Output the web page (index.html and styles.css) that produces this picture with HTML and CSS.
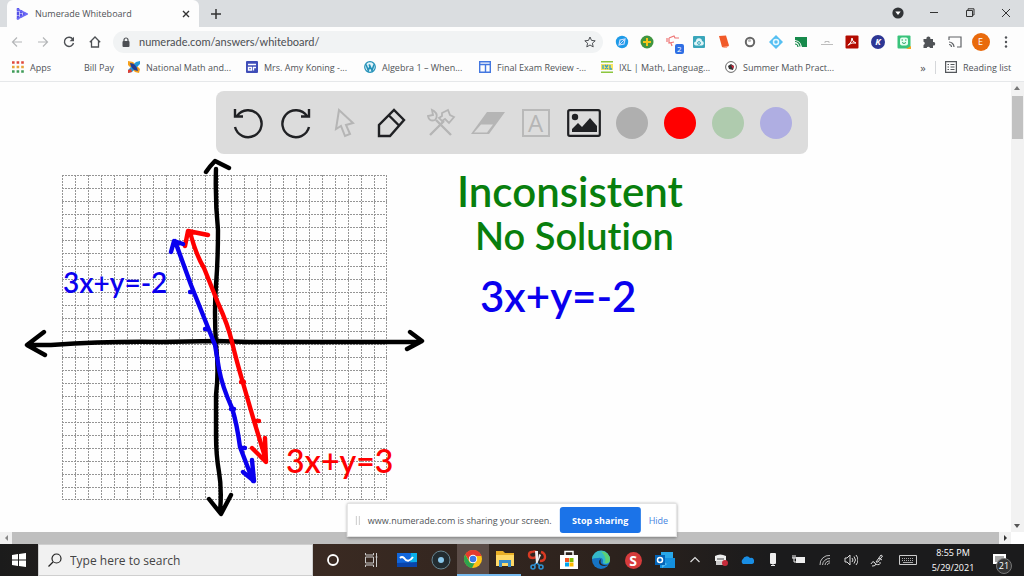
FILE: index.html
```html
<!DOCTYPE html>
<html lang="en">
<head>
<meta charset="utf-8">
<title>Numerade Whiteboard</title>
<link rel="stylesheet" href="styles.css">
</head>
<body>
<header class="tabstrip">
  <div class="tab">
    <svg class="icon12" viewBox="0 0 12 12"><path d="M2 0v12M5 2v8M8 4v4" stroke="#5551e8" stroke-width="2.400" stroke-dasharray="3.400 .6"/><path d="M1 1l10 5-10 5" fill="none" stroke="#6c69f5" stroke-width="1.800"/></svg>
    <span class="tab-title">Numerade Whiteboard</span>
    <button class="plain" aria-label="Close tab"><svg class="icon8" viewBox="0 0 8 8"><path d="M1 1l6 6M7 1L1 7" stroke="#333" stroke-width="1.400"/></svg></button>
  </div>
  <button class="plain newtab" aria-label="New tab"><svg class="icon10" viewBox="0 0 10 10"><path d="M5 0v10M0 5h10" stroke="#333" stroke-width="1.500"/></svg></button>
  <div class="window-buttons">
    <button class="plain" aria-label="Tab search"><svg class="icon12" viewBox="0 0 12 12"><circle cx="6" cy="6" r="5.600" fill="#303336"/><path d="M3.300 4.400h5.400L6 8z" fill="#fff"/></svg></button>
    <button class="plain" aria-label="Minimize"><svg class="icon10" viewBox="0 0 10 10"><path d="M1 4.500h8" stroke="#333"/></svg></button>
    <button class="plain" aria-label="Restore"><svg class="icon10" viewBox="0 0 10 10"><path d="M1.500 2.500h6v6h-6zM3 2.500V.8h6V7H7.500" fill="none" stroke="#333"/></svg></button>
    <button class="plain" aria-label="Close"><svg class="icon10" viewBox="0 0 10 10"><path d="M1 1l8 8M9 1L1 9" stroke="#333"/></svg></button>
  </div>
</header>

<div class="toolbar">
  <nav class="nav">
    <button class="plain" aria-label="Back"><svg class="icon12" viewBox="0 0 12 12"><path d="M11 6H1.500M6 1.500L1.500 6 6 10.500" fill="none" stroke="#b4b6b8" stroke-width="1.200"/></svg></button>
    <button class="plain" aria-label="Forward"><svg class="icon12" viewBox="0 0 12 12"><path d="M1 6h9.500M6 1.500L10.500 6 6 10.500" fill="none" stroke="#b4b6b8" stroke-width="1.200"/></svg></button>
    <button class="plain" aria-label="Reload"><svg class="icon12" viewBox="0 0 12 12"><path d="M9.800 3.200A4.600 4.600 0 1 0 10.500 7" fill="none" stroke="#4d5054" stroke-width="1.400"/><path d="M11 .8v4.400H6.600z" fill="#4d5054"/></svg></button>
    <button class="plain" aria-label="Home"><svg class="icon12" viewBox="0 0 12 12"><path d="M.8 6.200L6 1l5.200 5.200M2.500 5v6h7V5" fill="none" stroke="#4d5054" stroke-width="1.300"/></svg></button>
  </nav>
  <form class="omnibox">
    <svg class="icon10" viewBox="0 0 10 10"><rect x="1.500" y="4" width="7" height="6" rx="1" fill="#4d5054"/><path d="M3 5V3a2 2 0 0 1 4 0v2" fill="none" stroke="#4d5054" stroke-width="1.200"/></svg>
    <input class="url" type="text" aria-label="Address" value="numerade.com/answers/whiteboard/">
    <button type="button" class="plain" aria-label="Bookmark"><svg class="icon12" viewBox="0 0 12 12"><path d="M6 1l1.500 3.400 3.700.4-2.800 2.400.8 3.700L6 9l-3.200 1.900.8-3.700L.8 4.800l3.700-.4z" fill="none" stroke="#4d5054"/></svg></button>
  </form>
  <div class="extensions">
    <button class="plain" aria-label="Compass"><svg class="icon14" viewBox="0 0 14 14"><circle cx="7" cy="7" r="6.200" fill="#1e9be8"/><path d="M4 10l1-5 5-1-1 5z" fill="none" stroke="#cdf" stroke-width="1.200"/><path d="M5 9l4-4" stroke="#cdf"/></svg></button>
    <button class="plain" aria-label="Add"><svg class="icon14" viewBox="0 0 14 14"><circle cx="7" cy="7" r="6.500" fill="#3f9540"/><path d="M7 3v8M3 7h8" stroke="#f5c518" stroke-width="2"/></svg></button>
    <button class="plain badge-host" aria-label="Announcements"><svg class="icon14" viewBox="0 0 14 14"><path d="M3 3l5-2 1 2h4M3 3v5l5-1M1 3v4M5 8l1 3" fill="none" stroke="#ee7575" stroke-width="1.200"/></svg><span class="badge">2</span></button>
    <button class="plain" aria-label="Cloud"><svg class="icon14" viewBox="0 0 14 14"><rect x="1" y="1" width="12" height="12" rx="1" fill="#3aa6ba"/><path d="M4 10.500a2 2 0 0 1 0-4 3 3 0 0 1 6-.5 2.300 2.300 0 0 1 0 4.500z" fill="#dff5f8"/><circle cx="7" cy="8" r="1.400" fill="none" stroke="#3aa6ba"/></svg></button>
    <button class="plain" aria-label="Notes"><svg class="icon14" viewBox="0 0 14 14"><path d="M2 1l7-.5 3 10L9 13l-4-1z" fill="#f15a29"/><path d="M5 12l7-1-3 2z" fill="#ffb199"/></svg></button>
    <button class="plain" aria-label="Lens"><svg class="icon14" viewBox="0 0 14 14"><circle cx="7" cy="7" r="4.200" fill="#fff" stroke="#666" stroke-width="2"/><circle cx="6.500" cy="5.500" r="1.600" fill="#bbb"/></svg></button>
    <button class="plain" aria-label="Diamond"><svg class="icon14" viewBox="0 0 14 14"><path d="M7 0l7 7-7 7-7-7z" fill="#55bff2"/><circle cx="7" cy="7" r="2.500" fill="#55bff2" stroke="#e5f8ff" stroke-width="1.500"/></svg></button>
    <button class="plain" aria-label="Classroom cast"><svg class="icon14" viewBox="0 0 14 14"><path d="M1 2h12v10H8Q7 6 1 5z" fill="#178a4c"/><path d="M1 6.500a5 5 0 0 1 5 5M1 9a3 3 0 0 1 3 3" fill="none" stroke="#178a4c" stroke-width="1.200"/></svg></button>
    <button class="plain" aria-label="Desk"><svg class="icon14" viewBox="0 0 14 14"><path d="M1 9.500h12M5 8V6.500h4V8" fill="none" stroke="#bdbdbd"/></svg></button>
    <button class="plain" aria-label="PDF"><svg class="icon14" viewBox="0 0 14 14"><rect x=".5" y=".5" width="13" height="13" rx="1" fill="#b30b00"/><path d="M7 3q0 4-4 7.500M7 3q0 4 4 5-4-1-8 2" fill="none" stroke="#fff"/></svg></button>
    <button class="plain" aria-label="K"><span class="dot dot-k">K</span></button>
    <button class="plain" aria-label="Bitmoji"><svg class="icon14" viewBox="0 0 14 14"><rect x=".5" y=".5" width="13" height="13" rx="1" fill="#39c37b"/><rect x="3" y="2.500" width="8" height="8" rx="2" fill="#e7fff2"/><path d="M4.500 5h1.500M8 5h1.500M5 7.500q2 2 4 0" fill="none" stroke="#25a463"/><path d="M9 14l5-3v3z" fill="#f5a623"/></svg></button>
    <button class="plain" aria-label="Extensions"><svg class="icon14" viewBox="0 0 14 14"><path d="M1.500 4h3a2 2 0 1 1 3.800 0h2.700v3a1.800 1.800 0 1 1 0 3.500V13H8a1.700 1.700 0 0 0-3.300 0H1.500v-3a1.700 1.700 0 0 0 0-3.300z" fill="#505357"/></svg></button>
    <button class="plain" aria-label="Cast"><svg class="icon14" viewBox="0 0 14 14"><path d="M1 5V2h12v10H9M1 7a5 5 0 0 1 5 5M1 9.500A2.500 2.500 0 0 1 3.500 12" fill="none" stroke="#606367" stroke-width="1.200"/></svg></button>
    <button class="plain" aria-label="Profile"><span class="dot dot-e">E</span></button>
    <button class="plain" aria-label="Menu"><svg class="icon14" viewBox="0 0 14 14"><g fill="#505357"><circle cx="7" cy="2.500" r="1.200"/><circle cx="7" cy="7" r="1.200"/><circle cx="7" cy="11.500" r="1.200"/></g></svg></button>
  </div>
</div>

<nav class="bookmarks">
  <a href="#" class="bm"><svg class="icon12" viewBox="0 0 12 12"><g stroke-width="2.600" stroke-dasharray="2.600 2"><path d="M0 1.500h12" stroke="#e0483c"/><path d="M0 6h12" stroke="#e8a33a"/><path d="M0 10.500h12" stroke="#3f9c58"/></g></svg>Apps</a>
  <a href="#" class="bm"><span class="icon12"></span>Bill Pay</a>
  <a href="#" class="bm"><svg class="icon12" viewBox="0 0 12 12"><path d="M0 0l5 1 7 7-1 4-4-1-7-7z" fill="#f5a01c"/><path d="M12 0L8 1 0 9v3l4-1 8-8z" fill="#2498d8"/><path d="M2 2q6 0 8 8-7-1-8-8z" fill="#263c8f"/><path d="M0 9l3-1 1 3-4 1z" fill="#e23e32"/></svg>National Math and...</a>
  <a href="#" class="bm"><svg class="icon12" viewBox="0 0 12 12"><rect width="12" height="12" rx="1" fill="#3f4db8"/><path d="M2 3.500h8M2.500 6.500h3v2.500h-3zM7 6.500h3M7.500 6v3.500" stroke="#fff" stroke-width="1.300" fill="none"/></svg>Mrs. Amy Koning -...</a>
  <a href="#" class="bm"><svg class="icon12" viewBox="0 0 12 12"><circle cx="6" cy="6" r="5.300" fill="#e3f5fb" stroke="#2391b8" stroke-width="1.200"/><path d="M2 3.500l2.300 6L6 5l2 4.500 2-6M5 3.500l1 2" fill="none" stroke="#2391b8" stroke-width="1.600"/></svg>Algebra 1 – When...</a>
  <a href="#" class="bm"><svg class="icon12" viewBox="0 0 12 12"><path d="M.7.7h10.600v10.600H.7zM.7 3.500h10.600M6.500 3.500v8" fill="none" stroke="#4377e0" stroke-width="1.400"/></svg>Final Exam Review -...</a>
  <a href="#" class="bm"><svg class="icon12" viewBox="0 0 12 12"><path d="M0 .8h12M0 11.200h12" stroke="#8cc63e" stroke-width="1.600"/><rect y="3" width="12" height="6" fill="#f8e55e"/><path d="M2 4v4M4 4l3 4M7 4L4 8M9 4v4h2" fill="none" stroke="#3c9fc0" stroke-width="1.300"/></svg>IXL | Math, Languag...</a>
  <a href="#" class="bm"><svg class="icon12" viewBox="0 0 12 12"><circle cx="6" cy="6" r="5.400" fill="#fff" stroke="#666"/><path d="M3 5l3-2 3 2-1 4-4-1z" fill="#333"/><path d="M6 4l3 1-1 3z" fill="#d7263d"/></svg>Summer Math Pract...</a>
  <button class="plain more" aria-label="More bookmarks">»</button>
  <a href="#" class="bm reading"><svg class="icon12" viewBox="0 0 12 12"><path d="M.6.6h10.800v10.800H.6zM2.500 3.500h1.500M5.500 3.500h4M2.500 6h1.500M5.500 6h4M2.500 8.500h1.500M5.500 8.500h4" fill="none" stroke="#55585c" stroke-width="1.200"/></svg>Reading list</a>
</nav>

<div class="viewport">
  <main class="board">
    <svg class="drawing" viewBox="0 82 1011 450" preserveAspectRatio="xMinYMin meet" role="img" aria-label="Graph of two parallel lines">
      <g fill="none" stroke="#959595" stroke-dasharray="2 1">
        <path d="M62 175.500h325m-325 13h325m-325 13h325m-325 13h325m-325 13h325m-325 13h325m-325 13h325m-325 13h325m-325 13h325m-325 13h325m-325 13h325m-325 13h325m-325 13h325m-325 13h325m-325 13h325m-325 13h325m-325 13h325m-325 13h325m-325 13h325m-325 13h325m-325 13h325m-325 13h325m-325 13h325m-325 13h325m-325 13h325m-325 12h325"/>
        <path d="M62.500 175v325m13-325v325m13-325v325m13-325v325m13-325v325m13-325v325m13-325v325m13-325v325m13-325v325m13-325v325m13-325v325m13-325v325m13-325v325m13-325v325m13-325v325m13-325v325m13-325v325m13-325v325m13-325v325m13-325v325m13-325v325m13-325v325m13-325v325m13-325v325m13-325v325m12-325v325"/>
      </g>
      <g fill="none" stroke-width="4.400" stroke-linecap="round" stroke-linejoin="round">
        <path stroke="#000" d="M216 169Q215 200 218 230 218 260 216 285T216 345Q219 370 216 395V435Q216 455 219 472T220 512M206 172q4-6 9-11l14 7M209 499l12 15 10-19"/>
        <path stroke="#000" d="M28 345h23Q110 341 161 342L216 341l33 1h171M44 332L27 345l18 10M410 332l12 9-15 8"/>
        <path stroke="red" d="M190 232Q196 255 204 268L218 303Q228 325 232 342T243 383L254 421 266 460M185 246l3-15 20 4M265 438l1 24-14-14M241 382h3M255 421h4"/>
        <path stroke="#0a00ee" d="M175 241L191 285 203 315 215 345 219 369Q222 386 232 408 237 424 240 447L253 481M171 252l3-11 9 3M243 472l11 9-2-21M190 292h3M205 329h2M231 409h3M242 448h3"/>
      </g>
      <g class="ink">
        <text class="ink-large ink-green" x="457" y="207">Inconsistent</text>
        <text class="ink-title ink-green" x="475" y="250">No Solution</text>
        <text class="ink-large ink-blue" x="480" y="312">3x+y=-2</text>
        <text class="ink-small ink-blue" x="63" y="293">3x+y=-2</text>
        <text class="ink-medium ink-red" x="286" y="473">3x+y=3</text>
      </g>
    </svg>
    <div class="tools" role="toolbar" aria-label="Drawing tools">
      <button class="plain" aria-label="Undo"><svg class="icon32" viewBox="0 0 32 32"><path d="M3 20a13.500 13.500 0 1 0 2-11M3 2v7.500h8" fill="none" stroke="#202124" stroke-width="2.400"/></svg></button>
      <button class="plain" aria-label="Redo"><svg class="icon32" viewBox="0 0 32 32"><path d="M29 20A13.500 13.500 0 1 1 27 9M29 2v7.500h-8" fill="none" stroke="#202124" stroke-width="2.400"/></svg></button>
      <button class="plain" aria-label="Select"><svg class="icon32" viewBox="0 0 32 32"><path d="M11 3L8 22l5-3 4 10 5-2-4-9 7-2z" fill="none" stroke="#b5b5b5" stroke-width="2"/></svg></button>
      <button class="plain" aria-label="Pen"><svg class="icon32" viewBox="0 0 32 32"><path d="M3 29V18L18 3l10 10-14 16zM13 8.500l10 10" fill="none" stroke="#202124" stroke-width="2.400"/></svg></button>
      <button class="plain" aria-label="Tools"><svg class="icon32" viewBox="0 0 32 32"><path d="M6 28l14-14M27 28L12 13" fill="none" stroke="#b5b5b5" stroke-width="2.400"/><path d="M8 3l1 5-5 1q1 6 7 4 4-5-1-9zM18 6l6-3 2 5 4 2-5 6-4-4-3 2-3-3 3-2z" fill="#dcdcdc" stroke="#b5b5b5" stroke-width="1.800"/></svg></button>
      <button class="plain" aria-label="Eraser"><svg class="icon34" viewBox="0 0 34 32"><path d="M0 27L16 5h18L18 27z" fill="#b5b5b5"/><path d="M3 25.500l7-8h12l-6 8z" fill="#dcdcdc"/></svg></button>
      <button class="plain" aria-label="Text"><span class="text-tool">A</span></button>
      <button class="plain" aria-label="Image"><svg class="icon34" viewBox="0 0 34 32"><rect x="1.200" y="3.200" width="31.600" height="25.600" rx="1.500" fill="none" stroke="#202124" stroke-width="2.200"/><circle cx="8" cy="10" r="3.200" fill="#202124"/><path d="M5 25v-3l6-6 4 4 8-9 7 8v6z" fill="#202124"/></svg></button>
      <button class="plain swatch swatch-gray" aria-label="Black"></button>
      <button class="plain swatch swatch-red" aria-label="Red"></button>
      <button class="plain swatch swatch-green" aria-label="Green"></button>
      <button class="plain swatch swatch-blue" aria-label="Blue"></button>
    </div>
  </main>
  <div class="vscroll"><svg class="arrow" viewBox="0 0 12 12"><path d="M3 8l3-4 3 4z" fill="#777"/></svg><div class="vthumb"></div><svg class="arrow" viewBox="0 0 12 12"><path d="M3 4l3 4 3-4z" fill="#555"/></svg></div>
  <div class="hscroll"><svg class="arrow" viewBox="0 0 12 12"><path d="M8 3L5 6l3 3z" fill="#888"/></svg><div class="hthumb"></div><svg class="arrow" viewBox="0 0 12 12"><path d="M5 3l3 3-3 3z" fill="#333"/></svg></div>
  <div class="share">
    <span class="grip"></span>
    <span class="share-text">www.numerade.com is sharing your screen.</span>
    <button class="stop">Stop sharing</button>
    <button class="plain hide">Hide</button>
  </div>
</div>

<footer class="taskbar">
  <button class="plain start" aria-label="Start"><svg class="icon14" viewBox="0 0 14 14"><path d="M0 2l6-1v5.500H0zM7 1l7-1v6.500H7zM0 7.500h6V13l-6-1zM7 7.500h7V14l-7-1z" fill="#fff"/></svg></button>
  <label class="search"><svg class="icon14" viewBox="0 0 14 14"><circle cx="8.500" cy="5.500" r="4.500" fill="none" stroke="#222" stroke-width="1.200"/><path d="M5 9l-4.500 4.500" stroke="#222" stroke-width="1.200"/></svg><input class="query" type="text" placeholder="Type here to search" aria-label="Search"></label>
  <div class="apps">
    <button class="plain app wide" aria-label="Cortana"><svg class="icon14" viewBox="0 0 14 14"><circle cx="7" cy="7" r="5" fill="none" stroke="#fff" stroke-width="1.800"/></svg></button>
    <button class="plain app medium" aria-label="Task view"><svg class="icon14" viewBox="0 0 14 14"><path d="M1.500 4h8v6h-8zM1.500 0v2h8V0M1.500 14v-2h8v2M12.500 0v14M11.500 4h2" fill="none" stroke="#ccc"/></svg></button>
    <button class="plain app medium" aria-label="Whiteboard"><svg class="icon20" viewBox="0 0 20 20"><path d="M0 3h20v14H0z" fill="#1267dc"/><path d="M14 3h6v14h-7z" fill="#0bb0ea"/><path d="M0 13l20-1v5H0z" fill="#0a44aa"/><path d="M3 8q2-2 4 0 4 6 9-1" fill="none" stroke="#fff" stroke-width="2"/></svg></button>
    <button class="plain app" aria-label="Recorder"><svg class="icon20" viewBox="0 0 20 20"><circle cx="10" cy="10" r="9" fill="#222c30" stroke="#668591"/><circle cx="10" cy="10" r="3" fill="#8ac7ea"/></svg></button>
    <button class="plain app active" aria-label="Chrome"><svg class="icon20" viewBox="0 0 20 20"><circle cx="10" cy="10" r="9" fill="#fbc116"/><path d="M2.200 5.500A9 9 0 0 1 18.500 7H10l-3.500 5z" fill="#e33b2e"/><path d="M2.200 5.500L7 14l5-1-3 6A9 9 0 0 1 2.200 5.500z" fill="#2da44e"/><circle cx="10" cy="10" r="4.200" fill="#fff"/><circle cx="10" cy="10" r="3.300" fill="#3b78e7"/></svg></button>
    <button class="plain app open" aria-label="File Explorer"><svg class="icon20" viewBox="0 0 20 20"><path d="M1 2h7l2 2h9v13H1z" fill="#e9af27"/><path d="M1 6h18v11H1z" fill="#ffd967"/><path d="M4 18v-7h12v7h-3v-4H7v4z" fill="#378cc9"/></svg></button>
    <button class="plain app" aria-label="Snip"><svg class="icon20" viewBox="0 0 20 20"><path d="M5 2q-3 0-3 3t4 3 4-4-5-2M14 2q4 1 4 5t-5 4" fill="none" stroke="#d93a23" stroke-width="2.400"/><path d="M8 1l3 0 0 13-2 0zM12 4l2 1-4 9z" fill="#eee"/><path d="M9 13l-2 3M10 13l3 3" stroke="#2f91d0" stroke-width="1.500"/><circle cx="6" cy="17" r="2" fill="none" stroke="#2f91d0" stroke-width="1.600"/><circle cx="14" cy="17" r="2" fill="none" stroke="#2f91d0" stroke-width="1.600"/></svg></button>
    <button class="plain app" aria-label="Store"><svg class="icon20" viewBox="0 0 20 20"><path d="M6 6V1.500h8V6" fill="none" stroke="#fff" stroke-width="1.500"/><path d="M1 5h18v14H1z" fill="#fff"/><path d="M6 8h4v4H6z" fill="#f25022"/><path d="M10.500 8h4v4h-4z" fill="#7fba00"/><path d="M6 12.500h4v4H6z" fill="#00a4ef"/><path d="M10.500 12.500h4v4h-4z" fill="#ffb900"/></svg></button>
    <button class="plain app" aria-label="Edge"><svg class="icon20" viewBox="0 0 20 20"><circle cx="10" cy="10" r="9" fill="#1674c5"/><path d="M1 9a9 9 0 0 1 18 1q0 4-5 4-3 0-2-3 0-4-5-3-4 0-6 1z" fill="#35b8c8"/><path d="M10 1.500a8.500 8.500 0 0 1 9 8.500q-1 4-5 3 2-6-4-11.500z" fill="#5cd074"/><path d="M10 9q-2 5 3 6 3 1 5-1-2 2-4 2-6 0-6-4 0-2 2-3z" fill="#2c221d"/></svg></button>
    <button class="plain app" aria-label="Snagit"><span class="snag">S</span></button>
    <button class="plain app" aria-label="Outlook"><svg class="icon20" viewBox="0 0 20 20"><path d="M6 2h12v7H6z" fill="#28a8ea"/><path d="M5 8h15v10H5z" fill="#1490df"/><path d="M20 8l-8 6-5-4v8z" fill="#50b8f0"/><path d="M0 5h10v10H0z" fill="#0364b8"/><circle cx="5" cy="10" r="2.500" fill="none" stroke="#fff" stroke-width="1.500"/></svg></button>
  </div>
  <div class="tray">
    <button class="plain" aria-label="Show hidden icons"><svg class="icon14" viewBox="0 0 14 14"><path d="M2.500 9L7 4.500 11.500 9" fill="none" stroke="#ddd" stroke-width="1.200"/></svg></button>
    <button class="plain" aria-label="Device"><svg class="icon14" viewBox="0 0 14 14"><path d="M1 3q5-3 11 0v5H1z" fill="#eee"/><path d="M2 8h7v4H2z" fill="#ccc"/><path d="M3 6h7" stroke="#444"/><circle cx="11" cy="10" r="3" fill="#c62b3b"/></svg></button>
    <button class="plain" aria-label="OneDrive"><svg class="icon14" viewBox="0 0 14 14"><path d="M3 11a3 3 0 0 1 0-5 4 4 0 0 1 7-1 3 3 0 0 1 2 6z" fill="#198ee4"/></svg></button>
    <button class="plain" aria-label="Microphone"><svg class="icon14" viewBox="0 0 14 14"><rect x="4" y="0" width="6" height="11" rx="1" fill="#eee"/><path d="M7 11v2M5 12.500h4" stroke="#eee"/></svg></button>
    <button class="plain" aria-label="Battery"><svg class="icon14" viewBox="0 0 14 14"><path d="M4 4h9v6H4z" fill="#eee"/><path d="M1 2v3M3 2v3M0 5h4M2 5v4h2" stroke="#eee" fill="none"/></svg></button>
    <button class="plain" aria-label="Network"><svg class="icon14" viewBox="0 0 14 14"><path d="M2 12A9 9 0 0 1 12 2.500M4.500 12A7 7 0 0 1 12 5.500M7 12a5 5 0 0 1 5-4M9.500 12a2 2 0 0 1 2.500-2" fill="none" stroke="#bbb"/></svg></button>
    <button class="plain" aria-label="Volume"><svg class="icon14" viewBox="0 0 14 14"><path d="M1 5h2l3-3v10L3 9H1zM8 5q2 2 0 4M10 3.500q3 3.500 0 7M12 2q4 5 0 10" fill="none" stroke="#ddd"/></svg></button>
    <button class="plain" aria-label="Pen input"><svg class="icon14" viewBox="0 0 14 14"><path d="M6 9l5-7 1.500 1L8 9zM1 11q2-4 4-1t-3 3M5 11q6 2 5-2M9 5l3 2" fill="none" stroke="#ddd"/></svg></button>
    <button class="plain" aria-label="Keyboard"><svg class="icon18" viewBox="0 0 18 14"><path d="M.5 2.500h17v9H.5z" fill="none" stroke="#ccc"/><path d="M3 5.500h12M3 7.500h12" stroke="#aaa" stroke-dasharray="1 1"/><path d="M4 9.500h10" stroke="#aaa"/></svg></button>
  </div>
  <div class="clock"><time>8:55 PM</time><time>5/29/2021</time></div>
  <button class="plain notify badge-host" aria-label="Notifications"><svg class="icon14" viewBox="0 0 14 14"><path d="M0 1h13v10H7l-3 3v-3H0z" fill="#fff"/><path d="M2 4h9M2 6h9M2 8h6" stroke="#555"/></svg><span class="count">21</span></button>
</footer>
</body>
</html>
```
FILE: styles.css
```css
* { box-sizing: border-box; }
body { margin: 0; height: 100vh; display: flex; flex-direction: column; overflow: hidden; background: #fff; color: #505357; font-family: "Open Sans", "Noto Sans", sans-serif; font-size: 9px; }
svg { display: block; flex: none; }
.plain { border: 0; padding: 0; background: none; font: inherit; color: inherit; display: flex; align-items: center; justify-content: center; }
input { border: 0; padding: 0; outline: 0; background: none; font: inherit; color: inherit; min-width: 0; flex: 1; }
a { color: inherit; text-decoration: none; }
.icon8 { width: 8px; height: 8px; }
.icon10 { width: 10px; height: 10px; }
.icon12 { width: 12px; height: 12px; flex: none; }
.icon14 { width: 14px; height: 14px; }
.icon18 { width: 18px; height: 14px; }
.icon20 { width: 20px; height: 20px; }
.icon32 { width: 32px; height: 32px; }
.icon34 { width: 34px; height: 32px; }

.tabstrip { flex: none; height: 27px; display: flex; align-items: stretch; background: #dadde0; padding-left: 7px; }
.tab { width: 192px; display: flex; align-items: center; gap: 7px; padding: 0 9px; background: #fdfdfd; border-radius: 6px 6px 0 0; }
.tab-title { flex: 1; white-space: nowrap; }
.newtab { width: 34px; }
.window-buttons { margin-left: auto; display: grid; grid-template-columns: repeat(4, 36px); padding-bottom: 2px; }

.toolbar { flex: none; height: 29px; display: flex; align-items: center; background: #fdfdfd; padding: 0 5px 0 4px; }
.nav { display: grid; grid-template-columns: repeat(4, 26px); margin-right: 5px; }
.omnibox { flex: 1; min-width: 0; height: 22px; margin: 0 6px 0 0; padding: 0 7px 0 8px; display: flex; align-items: center; gap: 8px; border-radius: 11px; background: #f1f3f4; }
.url { font-family: Lato, sans-serif; font-size: 11px; color: #4b4e52; }
.extensions { width: 410px; display: flex; }
.extensions > .plain { flex: 1; height: 22px; }
.badge-host { position: relative; }
.badge { position: absolute; right: 2px; bottom: -1px; width: 9px; height: 10px; border-radius: 2px; background: #2f6fe4; color: #fff; font-size: 8px; line-height: 10px; }
.dot { border-radius: 50%; color: #fff; text-align: center; }
.dot-k { width: 14px; height: 14px; line-height: 14px; background: #2d3694; font-weight: 700; font-style: italic; }
.dot-e { width: 18px; height: 18px; line-height: 18px; background: #e96a0c; }

.bookmarks { flex: none; height: 26px; display: grid; grid-template-columns: 54px 62px 118px 118px 115px 122px 124px 1fr 24px 78px; align-items: center; padding: 0 11px 3px 12px; background: #fdfdfd; border-bottom: 1px solid #e6e8ea; }
.bm { display: flex; align-items: center; gap: 6px; white-space: nowrap; }
.reading { border-left: 1px solid #d5d7da; padding-left: 9px; }
.more { font-size: 11px; }

.viewport { position: relative; flex: 1; min-height: 0; display: grid; grid-template: minmax(0, 1fr) 12px / minmax(0, 1fr) 13px; }
.board { position: relative; min-width: 0; overflow: hidden; background: #fefefe; padding-top: 9px; }
.drawing { position: absolute; top: 0; left: 0; width: 100%; }
.ink { font-family: Lato, sans-serif; font-weight: 600; font-variant-ligatures: none; }
.ink-large { font-size: 42px; }
.ink-title { font-size: 38px; }
.ink-medium { font-size: 32px; }
.ink-small { font-size: 28px; }
.ink-green { fill: #087f0d; }
.ink-blue { fill: #0a00ee; }
.ink-red { fill: #f00; }
.tools { position: relative; width: 592px; max-width: 100%; height: 63px; margin: 0 auto; left: 6px; padding: 0 8px; display: grid; grid-template-columns: repeat(12, 1fr); align-items: center; justify-items: center; background: #dcdcdc; border-radius: 8px; }
.text-tool { width: 28px; height: 28px; border: 2px solid #b9b9b9; color: #b5b5b5; font: 24px/24px "Open Sans", sans-serif; text-align: center; }
.swatch { width: 32px; height: 32px; border-radius: 50%; }
.swatch-gray { background: #afafaf; }
.swatch-red { background: #f00; }
.swatch-green { background: #afcbae; }
.swatch-blue { background: #afaee2; }

.arrow { width: 12px; height: 12px; }
.vscroll { background: #f2f2f2; display: flex; flex-direction: column; justify-content: space-between; }
.vthumb { height: 43px; margin: 2px 1px auto; background: #c1c1c1; }
.hscroll { background: #f1f1f1; display: flex; }
.hthumb { flex: 1; background: #bfbfbf; }

.share { position: absolute; left: 50%; bottom: 7px; transform: translateX(-50%); height: 34px; padding: 0 8px; display: flex; align-items: center; gap: 8px; white-space: nowrap; background: #fff; border: 1px solid #e3e3e3; box-shadow: 0 1px 3px #777; }
.grip { width: 4px; height: 9px; border: 1px solid #ccc; border-width: 0 1px; }
.stop { height: 26px; width: 81px; border: 0; border-radius: 3px; padding: 0; background: #1b73e8; color: #fff; font: 700 9px "Open Sans", sans-serif; }
.hide { color: #4584df; }

.taskbar { flex: none; height: 32px; display: flex; background: linear-gradient(90deg, #1b1b1b 0, #3a2a22 32%, #2c221d 60%, #1b1b1c 75%); color: #eee; }
.start { width: 38px; }
.search { width: 275px; display: flex; align-items: center; gap: 8px; padding: 0 9px; background: #f1f1f1; border: 1px solid #cfcfcf; color: #444; font-size: 12px; }
.query::placeholder { color: #444; opacity: 1; }
.apps { display: flex; }
.app { width: 32px; }
.medium { width: 36px; }
.wide { width: 40px; }
.active { background: #5b4c47; border-bottom: 2px solid #76b9ed; }
.open { border-bottom: 2px solid #76b9ed; }
.snag { width: 17px; height: 17px; border-radius: 50%; background: #d63b3b; color: #fff; font-size: 14px; line-height: 17px; font-weight: 700; }
.tray { display: grid; grid-template-columns: repeat(8, 26px) 36px; margin-left: auto; }
.clock { width: 54px; display: flex; flex-direction: column; justify-content: center; align-items: center; line-height: 15px; color: #fff; }
.notify { width: 40px; margin-right: 4px; }
.count { position: absolute; left: 16px; bottom: 2px; width: 16px; height: 16px; border-radius: 50%; background: #333; border: 1px solid #777; color: #fff; font-size: 9px; line-height: 14px; text-align: center; }
```
